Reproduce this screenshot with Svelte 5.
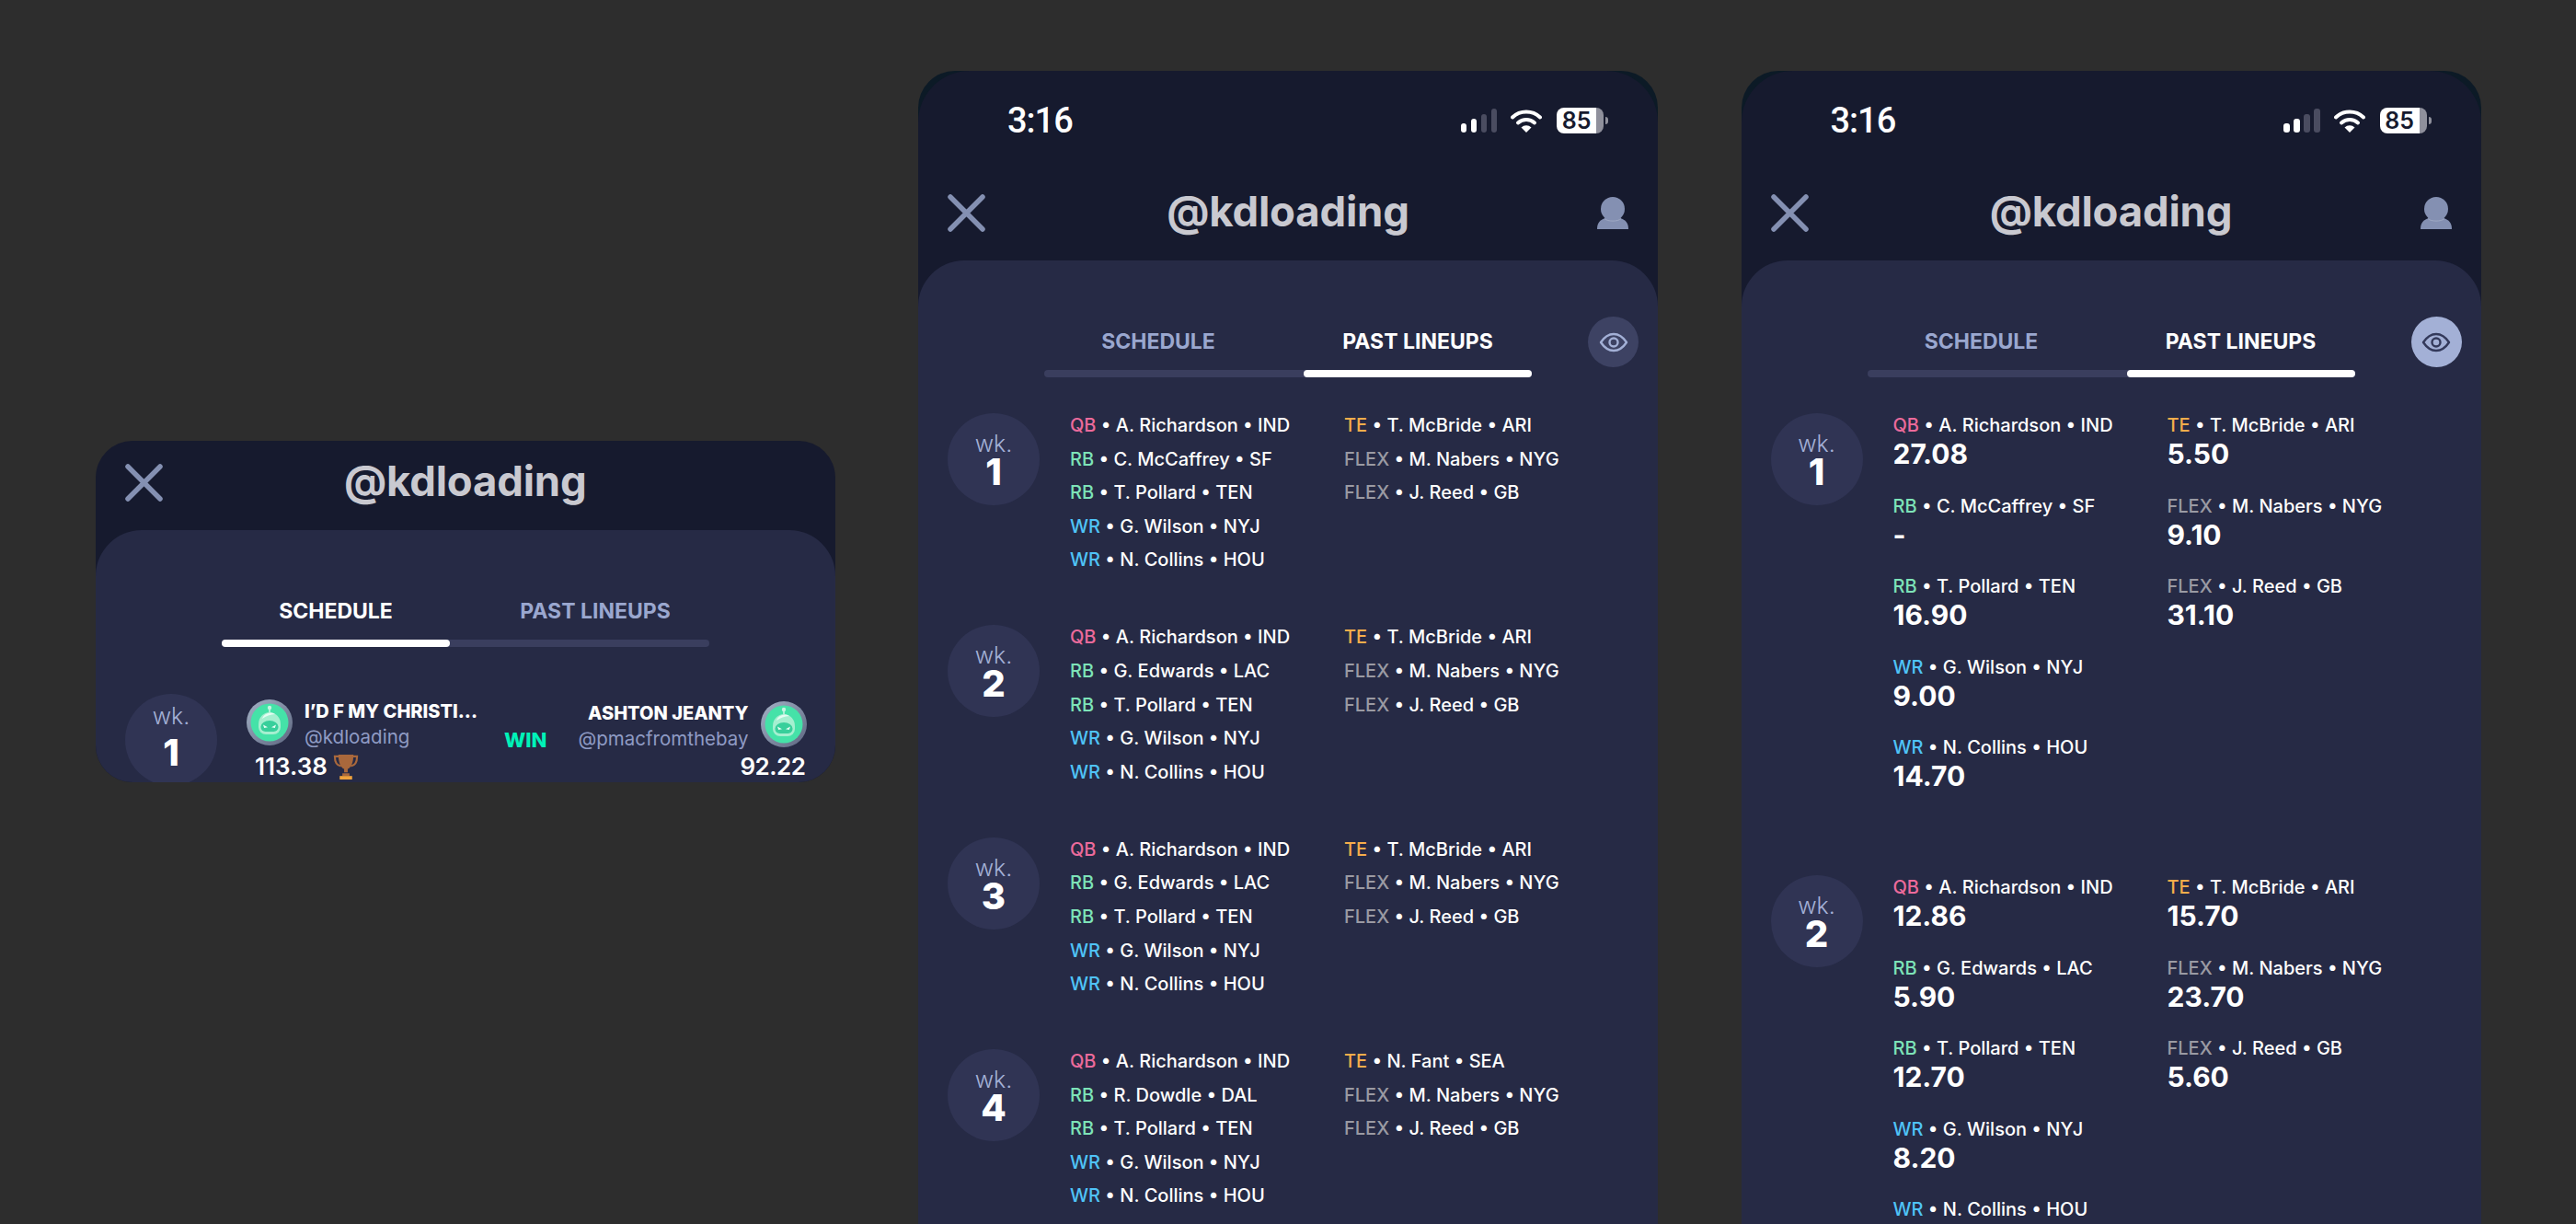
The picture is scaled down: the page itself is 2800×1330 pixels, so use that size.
<script>
  const sameLine = ["T. Pollard • TEN", "G. Wilson • NYJ", "N. Collins • HOU"];

  function lineup(rb1, te, scores) {
    const names = [
      ["QB", "A. Richardson • IND"],
      ["RB", rb1],
      ["RB", sameLine[0]],
      ["WR", sameLine[1]],
      ["WR", sameLine[2]],
      ["TE", te],
      ["FLEX", "M. Nabers • NYG"],
      ["FLEX", "J. Reed • GB"]
    ];
    return names.map(([pos, name], i) => ({ pos, name, score: scores ? scores[i] : null }));
  }

  const weeks = [
    { wk: 1, players: lineup("C. McCaffrey • SF", "T. McBride • ARI") },
    { wk: 2, players: lineup("G. Edwards • LAC", "T. McBride • ARI") },
    { wk: 3, players: lineup("G. Edwards • LAC", "T. McBride • ARI") },
    { wk: 4, players: lineup("R. Dowdle • DAL", "N. Fant • SEA") }
  ];

  const scored = [
    { wk: 1, players: lineup("C. McCaffrey • SF", "T. McBride • ARI", ["27.08", "-", "16.90", "9.00", "14.70", "5.50", "9.10", "31.10"]) },
    { wk: 2, players: lineup("G. Edwards • LAC", "T. McBride • ARI", ["12.86", "5.90", "12.70", "8.20", "", "15.70", "23.70", "5.60"]) }
  ];

  const screens = [
    { weeks, eyeOn: false },
    { weeks: scored, eyeOn: true }
  ];
</script>

{#snippet closeIcon()}
  <svg class="close" viewBox="0 0 41 41" width="41" height="41">
    <path d="M3 3 L38 38 M38 3 L3 38" fill="none" stroke="#8490b2" stroke-width="5.5" stroke-linecap="round" />
  </svg>
{/snippet}

{#snippet avatar(id)}
  <svg class="avatar" viewBox="0 0 50 50" width="50" height="50">
    <defs>
      <linearGradient id="ring{id}" x1="0" y1="0" x2="1" y2="1">
        <stop offset="0" stop-color="#a4b2c6" />
        <stop offset="1" stop-color="#5d6680" />
      </linearGradient>
    </defs>
    <circle cx="25" cy="25" r="25" fill="url(#ring{id})" />
    <circle cx="25" cy="25" r="20.500" fill="#45e2a8" />
    <path d="M25 14V9" stroke="#c6f5e2" stroke-width="1.6" />
    <circle cx="25" cy="9" r="2.2" fill="#c6f5e2" />
    <path d="M13 27a12 13 0 0 1 24 0v3a8 8 0 0 1-8 8h-8a8 8 0 0 1-8-8z" fill="#a5efd0" />
    <path d="M15.500 29.500a9.500 6.500 0 0 1 19 0v.5a5 5 0 0 1-5 5h-9a5 5 0 0 1-5-5z" fill="#38cf9b" />
    <path d="M18 27.500l5 2.800-3.800.6zM32 27.500l-5 2.800 3.800.6z" fill="#eafff6" />
    <path d="M17 21a9 8 0 0 1 14-5c-5 .5-10 2-14 5z" fill="#e4fcf2" />
  </svg>
{/snippet}

{#snippet statusBar()}
  <div class="status">
    <span class="time">3:16</span>
    <div class="status-icons">
      <div class="signal">
        <i class="s1"></i><i class="s2"></i><i class="s3 dim"></i><i class="s4 dim"></i>
      </div>
      <svg class="wifi" viewBox="0 0 34 26" width="34" height="26">
        <path d="M2 9.500a22 22 0 0 1 30 0" fill="none" stroke="#fff" stroke-width="4" stroke-linecap="round" />
        <path d="M8 15.500a13.500 13.500 0 0 1 18 0" fill="none" stroke="#fff" stroke-width="4" stroke-linecap="round" />
        <path d="M11.500 20.500a8 8 0 0 1 11 0L17 26z" fill="#fff" />
      </svg>
      <div class="battery"><span class="level">85</span><span class="rest"></span></div>
      <span class="nub"></span>
    </div>
  </div>
{/snippet}

{#snippet nav(showPerson)}
  <div class="nav">
    {@render closeIcon()}
    <h1>@kdloading</h1>
    {#if showPerson}
      <svg class="person" viewBox="0 0 34 35" width="34" height="35">
        <path d="M0 35c0-7 3-10 9-12h16c6 2 9 5 9 12z" fill="#8490b2" />
        <ellipse cx="17" cy="13" rx="13" ry="13" fill="#8490b2" />
        <path d="M8 23.500c3 3.500 15 3.500 18 0" fill="none" stroke="#a6aec8" stroke-width="0.800" />
      </svg>
    {/if}
  </div>
{/snippet}

{#snippet tabs(active, eye)}
  <div class="tab-row">
    <div class="tabs">
      <div class="labels">
        <span class:on={active === 0}>SCHEDULE</span>
        <span class:on={active === 1}>PAST LINEUPS</span>
      </div>
      <div class="track" class:at-end={active === 1}><div class="thumb"></div></div>
    </div>
    {#if eye}
      <button class="eye" class:lit={eye === "on"} aria-label="Toggle scores">
        <svg viewBox="0 0 32 22" width="32" height="22">
          <path d="M2 11C6 5 10.500 2 16 2s10 3 14 9c-4 6-8.500 9-14 9S6 17 2 11z" fill="none" stroke="currentColor" stroke-width="2.400" stroke-linejoin="round" />
          <circle cx="16" cy="11" r="4.500" fill="none" stroke="currentColor" stroke-width="2.400" />
        </svg>
      </button>
    {/if}
  </div>
{/snippet}

<div class="page">
  <section class="card small">
    {@render nav(false)}
    <div class="sheet">
      {@render tabs(0, null)}
      <div class="match">
        <div class="week tall"><span>wk.</span><b>1</b></div>
        <div class="side home">
          <div class="who">
            {@render avatar("a")}
            <div class="names">
              <strong>I’D F MY CHRISTI...</strong>
              <em>@kdloading</em>
            </div>
          </div>
          <div class="pts">
            113.38
            <svg class="trophy" viewBox="0 0 30 30" width="30" height="29">
              <path d="M7 3H2.500c0 6 2 10 7 11M23 3h4.500c0 6-2 10-7 11" fill="none" stroke="#a9683c" stroke-width="2.200" />
              <path d="M6.500 1h17c0 9-3 15-6.500 16v4h-4v-4C9.500 16 6.500 10 6.500 1z" fill="#a9683c" />
              <path d="M11 22h8v3h-8z" fill="#a9683c" />
              <path d="M8 25h14v4H8z" fill="#f0a23c" />
            </svg>
          </div>
        </div>
        <span class="result">WIN</span>
        <div class="side away">
          <div class="who">
            <div class="names">
              <strong>ASHTON JEANTY</strong>
              <em>@pmacfromthebay</em>
            </div>
            {@render avatar("b")}
          </div>
          <div class="pts">92.22</div>
        </div>
      </div>
    </div>
  </section>

  {#each screens as screen}
    <section class="card phone">
      <div class="inner">
        {@render statusBar()}
        {@render nav(true)}
        <div class="sheet">
          {@render tabs(1, screen.eyeOn ? "on" : "off")}
          <div class="weeks" class:with-scores={screen.eyeOn}>
            {#each screen.weeks as w}
              <div class="week-row">
                <div class="week"><span>wk.</span><b>{w.wk}</b></div>
                <div class="lineup">
                  {#each w.players as p}
                    <div class="slot">
                      <div class="player"><span class="pos {p.pos.toLowerCase()}">{p.pos}</span> • {p.name}</div>
                      {#if screen.eyeOn}<div class="score">{p.score}</div>{/if}
                    </div>
                  {/each}
                </div>
              </div>
            {/each}
          </div>
        </div>
      </div>
    </section>
  {/each}
</div>

<style>
  :global(body) {
    background: #2d2d2d;
  }

  .page {
    display: flex;
    align-items: flex-start;
    gap: 90.500px;
    height: 1330px;
    box-sizing: border-box;
    padding: 77px 0 0 104px;
    overflow: hidden;
    background: #2d2d2d;
    font-family: Inter, "Liberation Sans", sans-serif;
    color: #fff;
  }

  .card {
    width: 804px;
    flex: none;
    overflow: hidden;
    display: flex;
    flex-direction: column;
    background: #161a2e;
  }

  .small {
    width: 803.500px;
    margin-top: 402px;
    height: 371px;
    border-radius: 40px;
  }

  .phone {
    height: 1253px;
    border-radius: 40px 40px 0 0;
    background: #0c1a26;
  }

  .inner {
    flex: 1;
    min-height: 0;
    display: flex;
    flex-direction: column;
    border-radius: 56px 56px 0 0;
    background: #161a2e;
  }

  .status {
    display: flex;
    align-items: center;
    justify-content: space-between;
    height: 40px;
    padding: 34px 54px 35px 97px;
  }

  .time {
    font-family: Roboto, sans-serif;
    font-size: 38px;
    font-weight: 500;
    letter-spacing: -1px;
  }

  .status-icons {
    display: flex;
    align-items: center;
  }

  .signal {
    display: flex;
    align-items: flex-end;
    gap: 4.500px;
    height: 26px;
    margin-right: 15px;
  }

  .signal i {
    display: block;
    width: 6.500px;
    border-radius: 3px;
    background: #fff;
  }

  .signal .s1 { height: 10px; }
  .signal .s2 { height: 15px; }
  .signal .s3 { height: 20px; }
  .signal .s4 { height: 26px; }
  .signal .dim { background: #4a4c60; }

  .battery {
    display: flex;
    width: 51px;
    height: 28px;
    margin-left: 16px;
  }

  .level {
    flex: 1;
    border-radius: 8px 0 0 8px;
    background: #fff;
    color: #161a2e;
    font-size: 25px;
    font-weight: 600;
    line-height: 28px;
    text-align: center;
  }

  .rest {
    width: 8px;
    border-radius: 0 8px 8px 0;
    background: #8f909c;
  }

  .nub {
    width: 3px;
    height: 8px;
    margin-left: 2px;
    border-radius: 0 3px 3px 0;
    background: #8f909c;
  }

  .nav {
    display: grid;
    grid-template-columns: 1fr auto 1fr;
    align-items: center;
    box-sizing: border-box;
    height: 97px;
    flex: none;
    padding: 0 32px 6px;
  }

  .close {
    justify-self: start;
  }

  .person {
    justify-self: end;
  }

  h1 {
    margin: 0 0 4px;
    font-size: 45.500px;
    font-weight: 700;
    color: #c9c9d0;
    line-height: 1;
    letter-spacing: -0.2px;
  }

  .sheet {
    flex: 1;
    min-height: 0;
    padding-top: 61px;
    border-radius: 50px 50px 0 0;
    background: #262a45;
  }

  .tab-row {
    display: flex;
    align-items: flex-start;
    justify-content: space-between;
    padding: 0 21px 0 137px;
  }

  .tabs {
    width: 530px;
    height: 66px;
    display: flex;
    flex-direction: column;
  }

  .labels {
    flex: 1;
    display: flex;
    justify-content: space-between;
    align-items: center;
    padding-bottom: 4px;
  }

  .labels span {
    width: 248px;
    text-align: center;
    font-size: 23px;
    font-weight: 700;
    color: #9aa7cf;
  }

  .labels span.on {
    color: #fff;
  }

  .track {
    display: flex;
    height: 8px;
    border-radius: 4px;
    background: #3a3e5e;
  }

  .track.at-end {
    justify-content: flex-end;
  }

  .thumb {
    width: 248px;
    border-radius: 4px;
    background: #fff;
  }

  .eye {
    display: grid;
    place-items: center;
    width: 55px;
    height: 55px;
    padding: 0;
    border: 0;
    border-radius: 50%;
    background: #3d4263;
    color: #a3b0d6;
  }

  .eye.lit {
    background: #a3b0d6;
    color: #33395a;
  }

  .weeks {
    display: flex;
    flex-direction: column;
    gap: 47.400px;
    padding: 39px 0 0 32px;
  }

  .weeks.with-scores {
    gap: 64px;
  }

  .week-row {
    display: flex;
    align-items: flex-start;
  }

  .week {
    flex: none;
    width: 100px;
    height: 100px;
    box-sizing: border-box;
    padding-top: 19px;
    border-radius: 50%;
    background: #303454;
    display: flex;
    flex-direction: column;
    align-items: center;
  }

  .week span {
    font-size: 25px;
    font-weight: 300;
    line-height: 28px;
    color: #a3b0d6;
  }

  .week b {
    font-size: 40px;
    font-weight: 800;
    line-height: 34px;
  }

  .week.tall {
    padding-top: 10px;
  }

  .week.tall b {
    margin-top: 9px;
  }

  .lineup {
    display: grid;
    grid-template-rows: repeat(5, auto);
    grid-auto-flow: column;
    grid-template-columns: 298px auto;
    margin-left: 33px;
  }

  .slot {
    height: 36.600px;
  }

  .with-scores .slot {
    height: 87.600px;
  }

  .player {
    font-size: 20px;
    font-weight: 500;
    line-height: 26px;
    white-space: nowrap;
  }

  .pos.qb { color: #ec6a9b; }
  .pos.rb { color: #7de3b8; }
  .pos.wr { color: #4fc3f7; }
  .pos.te { color: #f5ad4b; }
  .pos.flex { color: #9a9aa3; }

  .score {
    font-size: 30px;
    font-weight: 700;
    line-height: 36px;
  }

  .match {
    display: flex;
    align-items: flex-start;
    padding: 51px 31px 0 32px;
  }

  .side {
    padding-top: 6px;
  }

  .home {
    width: 280px;
    margin-left: 32px;
  }

  .away {
    margin-left: auto;
    padding-top: 8px;
  }

  .who {
    display: flex;
    gap: 13px;
    height: 50px;
  }

  .names {
    display: flex;
    flex-direction: column;
    margin-top: -1px;
  }

  .away .names {
    align-items: flex-end;
  }

  .names strong {
    font-size: 20px;
    font-weight: 800;
    line-height: 28px;
    white-space: nowrap;
  }

  .names em {
    font-style: normal;
    font-size: 20.500px;
    font-weight: 400;
    line-height: 28px;
    color: #8f9bc4;
  }

  .pts {
    display: flex;
    align-items: center;
    gap: 5px;
    margin-top: 8px;
    padding-left: 9px;
    font-size: 26px;
    font-weight: 600;
    line-height: 30px;
  }

  .away .pts {
    justify-content: flex-end;
    margin-top: 6px;
    padding: 0 1px 0 0;
    letter-spacing: -0.5px;
  }

  .result {
    margin-top: 37px;
    font-size: 22px;
    font-weight: 800;
    line-height: 27px;
    color: #00f2b8;
  }
</style>
